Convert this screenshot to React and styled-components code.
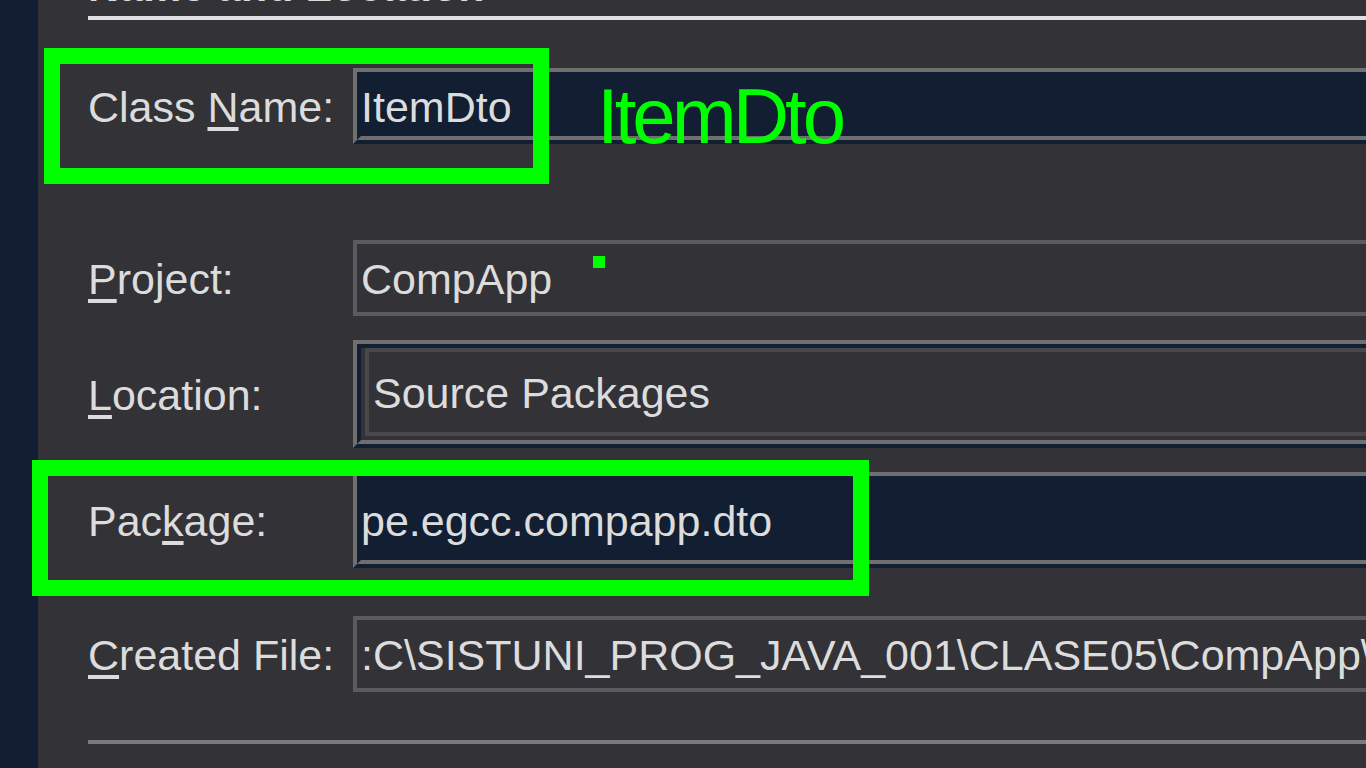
import React from "react";
import styled, { createGlobalStyle } from "styled-components";

const Global = createGlobalStyle`
  html, body { margin: 0; padding: 0; background: #333237; overflow: hidden; }
  #root { width: 1366px; height: 768px; }
`;

const Page = styled.div`
  display: flex;
  width: 1366px;
  height: 768px;
  overflow: hidden;
  background: #333237;
  font-family: "Liberation Sans", Arial, sans-serif;
  font-size: 43px;
  color: #dcdcdc;
`;

const Sidebar = styled.div`
  width: 38px;
  flex: none;
  background: #121e32;
`;

const Main = styled.div`
  flex: 1;
  min-width: 0;
  display: flex;
  flex-direction: column;
  padding-left: 50px;
`;

const Title = styled.div`
  margin-top: -36px;
  height: 44px;
  line-height: 44px;
  font-weight: bold;
  white-space: nowrap;
`;

const Rule = styled.div`
  height: 4px;
  margin-top: ${(p) => p.$mt}px;
  margin-right: -40px;
  background: ${(p) => p.$color};
`;

const Row = styled.div`
  position: relative;
  display: grid;
  grid-template-columns: 265px 1fr;
  align-items: center;
  margin-top: ${(p) => p.$mt}px;
  margin-right: -40px;
`;

const Label = styled.div`
  white-space: nowrap;
  line-height: 48px;
  padding-top: 2px;
`;

const Mn = styled.span`
  text-decoration: underline;
  text-decoration-thickness: 4px;
  text-underline-offset: 5px;
  text-decoration-skip-ink: none;
`;

const Bevel = styled.div`
  height: ${(p) => p.$h}px;
  box-sizing: border-box;
  border: 4px solid;
  border-color: #6f6f6f #121e32 #121e32 #6f6f6f;
  display: flex;
`;

const BevelInner = styled.div`
  flex: 1;
  min-width: 0;
  display: flex;
  align-items: ${(p) => (p.$stretch ? "stretch" : "center")};
  box-sizing: border-box;
  border: 4px solid;
  border-color: #121e32 #6f6f6f #6f6f6f #121e32;
  background: ${(p) => p.$bg};
`;

const FlatField = styled.div`
  height: ${(p) => p.$h}px;
  box-sizing: border-box;
  border: 4px solid #5b5a5f;
  padding-left: 4px;
  display: flex;
  align-items: center;
  overflow: hidden;
`;

const ComboFace = styled.div`
  flex: 1;
  min-width: 0;
  margin: 0 0 4px 4px;
  box-sizing: border-box;
  border: 4px solid #48474c;
  padding-left: 4px;
  display: flex;
  align-items: center;
`;

const FieldText = styled.div`
  white-space: nowrap;
  line-height: 48px;
  padding-top: 2px;
  overflow: hidden;
`;

const Highlight = styled.div`
  position: absolute;
  left: ${(p) => p.$l}px;
  top: ${(p) => p.$t}px;
  width: ${(p) => p.$w}px;
  height: ${(p) => p.$h}px;
  box-sizing: border-box;
  border: 16px solid #00ff00;
  pointer-events: none;
  z-index: 2;
`;

const Note = styled.div`
  position: absolute;
  left: 509px;
  top: 9px;
  font-size: 78px;
  line-height: 78px;
  letter-spacing: -4px;
  color: #00ff00;
  white-space: nowrap;
  z-index: 2;
`;

const Dot = styled.div`
  position: absolute;
  left: 505px;
  top: 16px;
  width: 12px;
  height: 12px;
  background: #00ff00;
  z-index: 2;
`;

const createdPath =
  ":C\\SISTUNI_PROG_JAVA_001\\CLASE05\\CompApp\\src\\pe\\egcc\\compapp\\dto\\ItemDto.java";

export default function App() {
  return (
    <>
      <Global />
      <Page>
        <Sidebar />
        <Main>
          <Title>Name and Location</Title>
          <Rule $mt={8} $color="#e0e0e0" />

          <Row $mt={48}>
            <Label>
              Class <Mn>N</Mn>ame:
            </Label>
            <Bevel $h={76}>
              <BevelInner $bg="#121e32">
                <FieldText>ItemDto</FieldText>
              </BevelInner>
            </Bevel>
            <Highlight $l={-44} $t={-20} $w={505} $h={136} />
            <Note>ItemDto</Note>
          </Row>

          <Row $mt={96}>
            <Label>
              <Mn>P</Mn>roject:
            </Label>
            <FlatField $h={76}>
              <FieldText>CompApp</FieldText>
            </FlatField>
            <Dot />
          </Row>

          <Row $mt={24}>
            <Label>
              <Mn>L</Mn>ocation:
            </Label>
            <Bevel $h={108}>
              <BevelInner $bg="#333237" $stretch>
                <ComboFace>
                  <FieldText>Source Packages</FieldText>
                </ComboFace>
              </BevelInner>
            </Bevel>
          </Row>

          <Row $mt={24}>
            <Label>
              Pac<Mn>k</Mn>age:
            </Label>
            <Bevel $h={96}>
              <BevelInner $bg="#121e32">
                <FieldText>pe.egcc.compapp.dto</FieldText>
              </BevelInner>
            </Bevel>
            <Highlight $l={-56} $t={-12} $w={837} $h={136} />
          </Row>

          <Row $mt={48}>
            <Label>
              <Mn>C</Mn>reated File:
            </Label>
            <FlatField $h={76}>
              <FieldText>{createdPath}</FieldText>
            </FlatField>
          </Row>

          <Rule $mt={48} $color="#7a797e" />
        </Main>
      </Page>
    </>
  );
}
